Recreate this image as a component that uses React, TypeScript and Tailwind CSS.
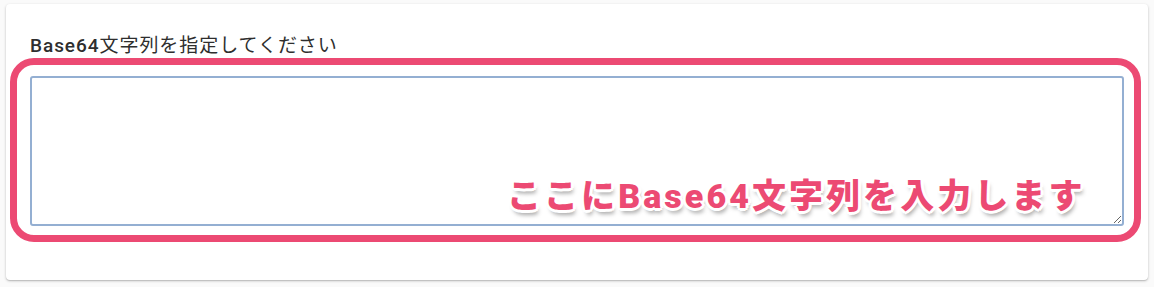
import React from "react";

const jp = "font-['Roboto','Noto_Sans_CJK_JP',sans-serif]";

export default function App() {
  return (
    <div className="min-h-[287px] w-full bg-[#fafafa] pt-1">
      <div className="relative mx-[6px] h-[276px] rounded bg-white px-6 pt-[29px] shadow-[0_1px_3px_rgba(0,0,0,0.2),0_1px_1px_rgba(0,0,0,0.12)]">
        <label className={`block text-[19px] leading-[25px] tracking-[0.05em] text-[#2e2e2e] ${jp}`}>
          <span className="font-medium">Base64</span>
          <span className="font-normal">文字列を指定してください</span>
        </label>
        <textarea className="mt-[18px] block h-[150px] w-full rounded-[3px] border-2 border-[#94afd2] bg-white p-2 outline-none" />

        {/* annotation */}
        <div className="pointer-events-none absolute top-[54px] right-[7px] bottom-[38px] left-[3.5px] rounded-[24px] border-[7px] border-[#ec4a73]" />
        <div
          className={`pointer-events-none absolute top-[175px] left-[501px] text-[34px] leading-none font-black tracking-[0.09em] whitespace-nowrap text-[#ec4a73] ${jp} [text-shadow:2px_0_0_#fff,-2px_0_0_#fff,0_2px_0_#fff,0_-2px_0_#fff,2px_2px_0_#fff,-2px_-2px_0_#fff,2px_-2px_0_#fff,-2px_2px_0_#fff,3px_0_0_#fff,-3px_0_0_#fff,0_3px_0_#fff,0_-3px_0_#fff,2px_5px_4px_rgba(0,0,0,0.35)]`}
        >
          ここにBase64文字列を入力します
        </div>
      </div>
    </div>
  );
}
